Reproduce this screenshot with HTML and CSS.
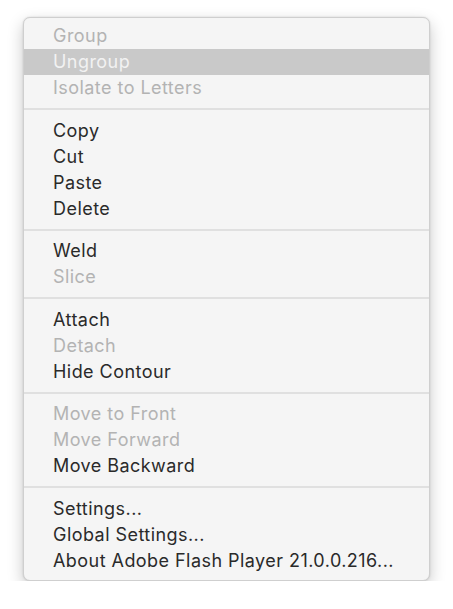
FILE: index.html
```html
<!DOCTYPE html>
<html>
<head>
<meta charset="utf-8">
<link rel="stylesheet" href="styles.css">
</head>
<body>
<div class="menu">
  <div class="item off">Group</div>
  <div class="item sel">Ungroup</div>
  <div class="item off">Isolate to Letters</div>
  <div class="sep"></div>
  <div class="item">Copy</div>
  <div class="item">Cut</div>
  <div class="item">Paste</div>
  <div class="item">Delete</div>
  <div class="sep"></div>
  <div class="item">Weld</div>
  <div class="item off">Slice</div>
  <div class="sep"></div>
  <div class="item">Attach</div>
  <div class="item off">Detach</div>
  <div class="item">Hide Contour</div>
  <div class="sep"></div>
  <div class="item off">Move to Front</div>
  <div class="item off">Move Forward</div>
  <div class="item">Move Backward</div>
  <div class="sep"></div>
  <div class="item">Settings...</div>
  <div class="item">Global Settings...</div>
  <div class="item">About Adobe Flash Player 21.0.0.216...</div>
</div>
</body>
</html>
```
FILE: styles.css
```css
html, body {
  margin: 0;
  padding: 0;
  background: #ffffff;
}
body {
  padding: 17px 23px 0 23px;
  font-family: Inter, "Liberation Sans", sans-serif;
}
.menu {
  width: 407px;
  box-sizing: border-box;
  background: #f5f5f5;
  border: 1px solid #cfcfcf;
  border-radius: 7px;
  padding: 5px 0 6px 0;
  box-shadow: 0 6px 16px rgba(0,0,0,0.22), 0 0 2px rgba(0,0,0,0.15);
}
.item {
  height: 26px;
  line-height: 26px;
  padding-left: 29px;
  font-size: 18px;
  letter-spacing: 0.45px;
  color: #2a2a2a;
}
.item.off {
  color: #b3b3b3;
}
.item.sel {
  background: #c9c9c9;
  color: #f2f2f2;
}
.sep {
  height: 2px;
  margin: 7px 0 7.5px 0;
  background: #e0e0e0;
}
```
